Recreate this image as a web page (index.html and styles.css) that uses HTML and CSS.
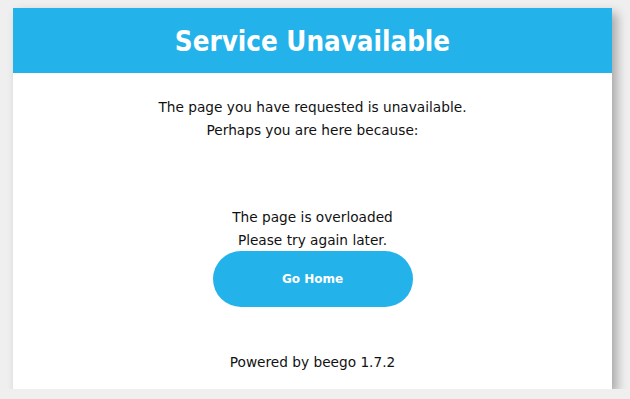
FILE: index.html
```html
<!DOCTYPE html>
<html>
<head>
<meta charset="utf-8">
<title>Service Unavailable</title>
<link rel="stylesheet" href="styles.css">
</head>
<body>
<div class="wrapper">
  <div class="navtop"><h1 class="title">Service Unavailable</h1></div>
  <div class="content">
    <p class="lines">The page you have requested is unavailable.<br>Perhaps you are here because:</p>
    <p class="lines reasons">The page is overloaded<br>Please try again later.</p>
    <a href="#" class="button">Go Home</a>
    <p class="powered">Powered by beego 1.7.2</p>
  </div>
</div>
</body>
</html>
```

FILE: styles.css
```css
* { margin: 0; padding: 0; box-sizing: border-box; }
body {
  background: #efefef;
  font-family: "DejaVu Sans", sans-serif;
  font-size: 13.7px;
  color: #111;
}
.wrapper {
  width: 599px;
  margin: 8px 0 0 13px;
  background: #fff;
  box-shadow: 5px 5px 10px rgba(0,0,0,0.3);
  display: flex;
  flex-direction: column;
}
.navtop {
  height: 65px;
  background: #24b2eb;
  display: flex;
  align-items: center;
  justify-content: center;
}
.title {
  color: #fff;
  font-family: "DejaVu Sans Condensed", "DejaVu Sans", sans-serif;
  font-size: 27.5px;
  font-weight: bold;
}
.content {
  display: flex;
  flex-direction: column;
  align-items: center;
  text-align: center;
  padding: 23px 0 15px;
}
.lines { line-height: 23px; }
.reasons { margin-top: 64px; }
.button {
  width: 200px;
  height: 56px;
  border-radius: 100px;
  background: #24b2eb;
  color: #fff;
  font-weight: bold;
  font-size: 12px;
  text-decoration: none;
  display: flex;
  align-items: center;
  justify-content: center;
  margin-top: -1px;
}
.powered { margin-top: 44px; line-height: 23px; }
```
